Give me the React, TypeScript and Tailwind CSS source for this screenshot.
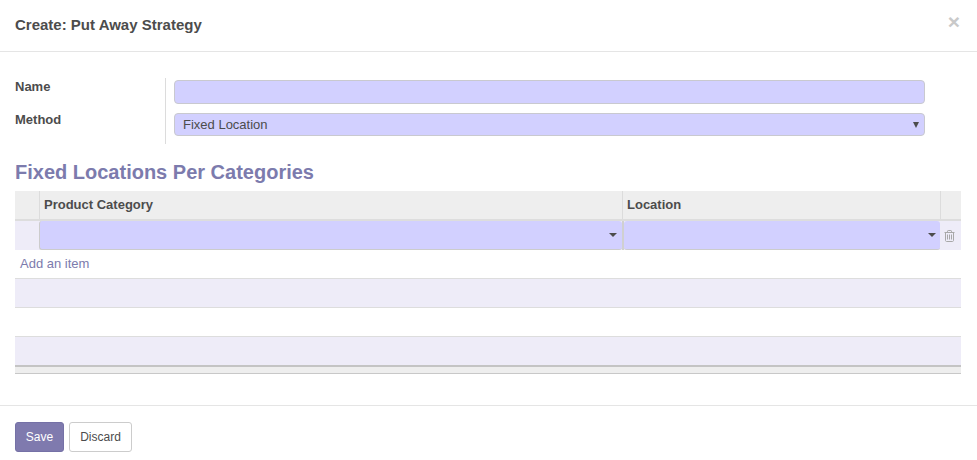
import React from "react";

function Caret({ className }: { className?: string }) {
  return <span className={"block w-0 h-0 border-l-[4px] border-r-[4px] border-t-[4px] border-l-transparent border-r-transparent border-t-[#4c4c4c] " + (className ?? "")} />;
}

function Trash() {
  return (
    <svg width="11" height="12" viewBox="0 0 11 12" fill="none" stroke="#a8a8a8" strokeWidth="1">
      <path d="M0.5 2.5H10.5M3.5 2.5V1.2C3.5 0.8 3.8 0.5 4.2 0.5H6.8C7.2 0.5 7.5 0.8 7.5 1.2V2.5M1.5 2.5V10.5C1.5 11 2 11.5 2.5 11.5H8.5C9 11.5 9.5 11 9.5 10.5V2.5M3.5 4.5V9.5M5.5 4.5V9.5M7.5 4.5V9.5" />
    </svg>
  );
}

export default function App() {
  return (
    <div className="w-[977px] h-[460px] bg-white flex flex-col overflow-hidden text-[13px] text-[#4c4c4c] font-['Liberation_Sans',Arial,sans-serif]">
      <header className="h-[52px] shrink-0 border-b border-[#e5e5e5] flex items-center justify-between pl-[15px] pr-[17px]">
        <h4 className="text-[15px] font-bold leading-[20px] -mt-[1px]">Create: Put Away Strategy</h4>
        <span className="text-[#c9c9c9] font-bold text-[21px] leading-[20px] -mt-[7px]">×</span>
      </header>

      <main className="flex-1 pt-[26px] pl-[15px] flex flex-col">
        <div className="flex h-[66px]">
          <div className="w-[150px] shrink-0 font-bold pt-[1px]">
            <div className="h-[33px] leading-[15px]">Name</div>
            <div className="leading-[15px]">Method</div>
          </div>
          <div className="border-l border-[#dcdcdc] pl-[8px] pt-[2px] w-[760px] flex flex-col gap-[9px]">
            <div className="h-[24px] rounded-[4px] border border-[#c9c9cf] bg-[#d2d0ff]" />
            <div className="h-[23px] rounded-[4px] border border-[#c9c9cf] bg-[#d2d0ff] flex items-center justify-between pl-[8px] pr-[5px]">
              <span>Fixed Location</span>
              <span className="block w-0 h-0 border-l-[3px] border-r-[3px] border-t-[6px] border-l-transparent border-r-transparent border-t-[#4c4c4c]" />
            </div>
          </div>
        </div>

        <h2 className="mt-[17px] text-[20px] leading-[23px] font-bold text-[#7c7bad]">Fixed Locations Per Categories</h2>

        <div className="mt-[7px] w-[946px] flex flex-col">
          <div className="h-[30px] bg-[#eeeeee] border-b-2 border-[#dddddd] flex font-bold">
            <div className="w-[25px] border-r border-[#dcdcdc]" />
            <div className="w-[583px] border-r border-[#dcdcdc] pl-[4px] leading-[27px]">Product Category</div>
            <div className="w-[318px] border-r border-[#dcdcdc] pl-[4px] leading-[27px]">Location</div>
          </div>
          <div className="h-[29px] bg-[#eeecf8] flex">
            <div className="w-[24px]" />
            <div className="w-[583px] bg-[#d2d0ff] border-b border-l border-[#cccccc] rounded-[3px] flex items-center justify-end pr-[5px]">
              <Caret />
            </div>
            <div className="w-[2px] bg-[#d0d0d0]" />
            <div className="w-[316px] bg-[#d2d0ff] border-b border-[#cccccc] rounded-[3px] flex items-center justify-end pr-[4px]">
              <Caret />
            </div>
            <div className="flex-1 flex items-center justify-start pl-[4px]">
              <Trash />
            </div>
          </div>
          <div className="h-[29px] border-b border-[#dddddd] pl-[5px] leading-[28px] text-[#7c7bad]">Add an item</div>
          <div className="h-[29px] bg-[#eeecf8] border-b border-[#dddddd]" />
          <div className="h-[29px] border-b border-[#dddddd]" />
          <div className="h-[28px] bg-[#eeecf8]" />
          <div className="h-[9px] bg-[#eeeeee] border-t-2 border-b border-t-[#c4c4c4] border-b-[#c8c8c8]" />
        </div>
      </main>

      <footer className="h-[55px] shrink-0 border-t border-[#e5e5e5] pl-[15px] pt-[16px] flex items-start gap-[5px]">
        <button className="h-[30px] w-[49px] rounded-[3px] bg-[#7f7aae] border border-[#7571a6] text-white text-[12px]">Save</button>
        <button className="h-[30px] w-[63px] rounded-[3px] bg-white border border-[#cccccc] text-[#4c4c4c] text-[12px]">Discard</button>
      </footer>
    </div>
  );
}
